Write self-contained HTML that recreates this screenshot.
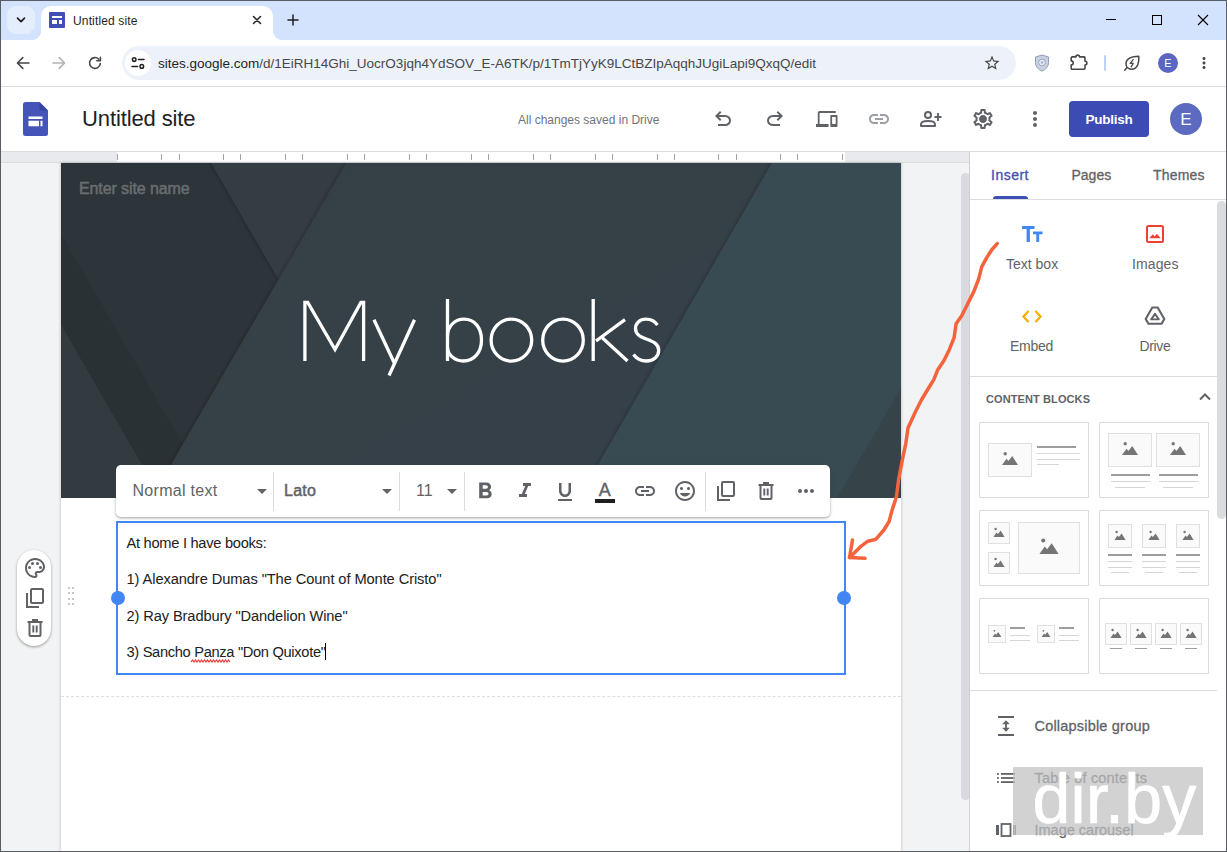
<!DOCTYPE html>
<html><head><meta charset="utf-8">
<style>
*{box-sizing:border-box;margin:0;padding:0}
html,body{width:1227px;height:852px;overflow:hidden;background:#fff;font-family:"Liberation Sans",sans-serif;}
#root{position:relative;width:1227px;height:852px;overflow:hidden;background:#fff}
.abs{position:absolute}
svg{position:absolute;overflow:visible}
.t{position:absolute;white-space:nowrap;line-height:1}
/* chrome */
#tabstrip{left:0;top:0;width:1227px;height:40px;background:#d3e3fd}
#tab{left:41px;top:6px;width:232px;height:34px;background:#fff;border-radius:10px 10px 0 0}
#tabL{left:31px;top:30px;width:10px;height:10px;background:radial-gradient(circle at 0 0,#d3e3fd 10px,#fff 10.5px)}
#tabR{left:273px;top:30px;width:10px;height:10px;background:radial-gradient(circle at 100% 0,#d3e3fd 10px,#fff 10.5px)}
#tsearch{left:7px;top:6px;width:28px;height:28px;border-radius:9px;background:#e4edfc}
#toolbar{left:0;top:40px;width:1227px;height:46px;background:#fff;border-radius:8px 8px 0 0}
#omni{left:122px;top:46px;width:894px;height:34px;border-radius:17px;background:#edf2fa}
#omniic{left:125px;top:50px;width:26px;height:26px;border-radius:13px;background:#fff}
#tbline{left:0;top:86px;width:1227px;height:1px;background:#dadce0}
/* app bar */
#appbar{left:0;top:87px;width:1227px;height:64px;background:#fff}
#appline{left:0;top:151px;width:1227px;height:1px;background:#dadce0}
#publish{left:1069px;top:101px;width:80px;height:36px;border-radius:4px;background:#3c4cb4;color:#fff;font-weight:bold;font-size:13.500px;letter-spacing:-0.250px;text-align:center;line-height:37.500px}
#avatar{left:1170px;top:103px;width:32px;height:32px;border-radius:16px;background:#5c6bc0;color:#fff;font-size:17px;text-align:center;line-height:34.500px}
/* canvas */
#canvas{left:0;top:151px;width:970px;height:701px;background:#f1f3f4}
#page{left:61px;top:163px;width:840px;height:689px;background:#fff;box-shadow:0 0 3px rgba(0,0,0,.25)}
#hero{left:61px;top:163px;width:840px;height:335px;background:#343d43;overflow:hidden}
/* side panel */
#side{left:969px;top:152px;width:258px;height:700px;background:#fff;border-left:1px solid #cdd0d5}
/* borders */
#bl{left:0;top:0;width:1px;height:852px;background:#5a5d63}
#bt{left:0;top:0;width:1227px;height:1px;background:#5a5d63}
#bb{left:0;top:851px;width:1227px;height:1px;background:#5a5d63}
#br{left:1226px;top:0;width:1px;height:852px;background:#5a5d63}
</style></head><body>
<div id="root">
<!-- CHROME -->
<div id="tabstrip" class="abs"></div>
<div id="tsearch" class="abs"></div>
<div id="toolbar" class="abs"></div>
<div id="tab" class="abs"></div><div id="tabL" class="abs"></div><div id="tabR" class="abs"></div>
<div id="omni" class="abs"></div><div id="omniic" class="abs"></div>
<div id="tbline" class="abs"></div>

<!-- tab strip items -->
<svg style="left:15px;top:14px;width:12px;height:12px" viewBox="0 0 12 12"><path d="M2.5 4.2 L6 7.7 L9.5 4.2" fill="none" stroke="#1f1f1f" stroke-width="1.7" stroke-linecap="round" stroke-linejoin="round"/></svg>
<div class="abs" style="left:49px;top:12px;width:16px;height:16px;background:#3f4fb5;border-radius:1px"></div>
<div class="abs" style="left:52px;top:16px;width:10px;height:2px;background:#fff"></div>
<div class="abs" style="left:52px;top:20px;width:5px;height:4px;background:#fff"></div>
<div class="abs" style="left:59px;top:20px;width:3px;height:4px;background:#fff"></div>
<div class="t" style="left:73px;top:15px;font-size:12px;letter-spacing:0.150px;color:#1f1f1f">Untitled site</div>
<svg style="left:252px;top:15px;width:10px;height:10px" viewBox="0 0 10 10"><path d="M1.5 1.5 L8.5 8.5 M8.5 1.5 L1.5 8.5" fill="none" stroke="#1f1f1f" stroke-width="1.5" stroke-linecap="round"/></svg>
<svg style="left:287px;top:14px;width:12px;height:12px" viewBox="0 0 12 12"><path d="M6 1 V11 M1 6 H11" fill="none" stroke="#1f1f1f" stroke-width="1.5" stroke-linecap="round"/></svg>
<!-- window controls -->
<div class="abs" style="left:1106px;top:19px;width:10px;height:1px;background:#000"></div>
<div class="abs" style="left:1152px;top:15px;width:10px;height:10px;border:1px solid #000"></div>
<svg style="left:1198px;top:15px;width:10px;height:10px" viewBox="0 0 10 10"><path d="M0 0 L10 10 M10 0 L0 10" fill="none" stroke="#000" stroke-width="1.1"/></svg>
<!-- nav icons -->
<svg style="left:15px;top:55px;width:16px;height:16px" viewBox="0 0 16 16"><path d="M14 8 H2.6 M7.8 2.6 L2.4 8 L7.8 13.4" fill="none" stroke="#474747" stroke-width="1.6" stroke-linecap="round" stroke-linejoin="round"/></svg>
<svg style="left:51px;top:55px;width:16px;height:16px" viewBox="0 0 16 16"><path d="M2 8 H13.4 M8.2 2.6 L13.6 8 L8.200 13.4" fill="none" stroke="#b4b4b4" stroke-width="1.6" stroke-linecap="round" stroke-linejoin="round"/></svg>
<svg style="left:87px;top:55px;width:16px;height:16px" viewBox="0 0 16 16"><path d="M13.300 8.600 A5.400 5.400 0 1 1 11.800 4.200" fill="none" stroke="#474747" stroke-width="1.6" stroke-linecap="round"/><path d="M13.400 2.200 V5.800 H9.800" fill="none" stroke="#474747" stroke-width="1.6" stroke-linecap="round" stroke-linejoin="round"/></svg>
<!-- site info icon -->
<svg style="left:130px;top:55px;width:16px;height:16px" viewBox="0 0 16 16"><g fill="none" stroke="#1f1f1f" stroke-width="1.5" stroke-linecap="round"><circle cx="4.200" cy="4.600" r="1.800"/><path d="M8.500 4.600 H14"/><circle cx="11.800" cy="11.400" r="1.800"/><path d="M2 11.400 H7.500"/></g></svg>
<div class="t" style="left:158px;top:57px;font-size:13.5px;color:#1f1f1f">sites.google.com<span style="color:#474747">/d/1EiRH14Ghi_UocrO3jqh4YdSOV_E-A6TK/p/1TmTjYyK9LCtBZIpAqqhJUgiLapi9QxqQ/edit</span></div>
<svg style="left:983px;top:54px;width:18px;height:18px" viewBox="0 0 24 24"><path fill="#474747" d="M22 9.240l-7.190-.620L12 2 9.190 8.630 2 9.240l5.460 4.730L5.820 21 12 17.270 18.180 21l-1.630-7.030L22 9.240zM12 15.400l-3.760 2.270 1-4.280-3.320-2.880 4.380-.380L12 6.100l1.710 4.040 4.380.380-3.320 2.880 1 4.280L12 15.400z"/></svg>
<!-- shield ext -->
<svg style="left:1034px;top:54px;width:16px;height:18px" viewBox="0 0 16 18"><path d="M8 1 L14.500 3 V8.500 C14.500 12.500 11.800 15.600 8 17 C4.200 15.600 1.500 12.500 1.500 8.500 V3 Z" fill="#c9d0e0" stroke="#8f9bb8" stroke-width="1"/><circle cx="8" cy="8.500" r="3.400" fill="#e7ebf3" stroke="#9aa5c0" stroke-width="1"/><circle cx="8" cy="8.500" r="1.300" fill="#aab3ca"/></svg>
<!-- puzzle -->
<svg style="left:1069px;top:53px;width:20px;height:20px" viewBox="0 0 20 20"><path d="M3.200 3.900 H6.900 A1.800 1.800 0 0 1 10.500 3.900 H15 A1 1 0 0 1 16 4.900 V8.200 A1.900 1.900 0 0 1 16 12 V15.200 A1 1 0 0 1 15 16.200 H3.200 A1 1 0 0 1 2.200 15.200 V11.900 A2 2 0 0 0 2.200 7.900 V4.900 A1 1 0 0 1 3.200 3.900 Z" fill="none" stroke="#474747" stroke-width="1.600" stroke-linejoin="round"/></svg>
<div class="abs" style="left:1104px;top:55px;width:2px;height:16px;background:#bdd1f8;border-radius:1px"></div>
<!-- leaf -->
<svg style="left:1123px;top:54px;width:18px;height:18px" viewBox="0 0 18 18"><path d="M15.800 2.200 C16.200 8 15 15.200 8.500 15.200 C5.500 15.200 3 13 3 9.800 C3 4.500 9 2.200 15.800 2.200 Z" fill="none" stroke="#474747" stroke-width="1.500" stroke-linejoin="round"/><path d="M3.800 13.600 L1.800 16.200" stroke="#474747" stroke-width="1.500" stroke-linecap="round"/><path d="M10.200 5.600 L7.200 9.400 H10.200 L8.200 12.800" fill="none" stroke="#474747" stroke-width="1.300" stroke-linejoin="round" stroke-linecap="round"/></svg>
<div class="abs" style="left:1158px;top:53px;width:20px;height:20px;border-radius:10px;background:#5b66c0;color:#fff;font-size:11px;line-height:20px;text-align:center">E</div>
<svg style="left:1195px;top:54px;width:18px;height:18px" viewBox="0 0 24 24"><path fill="#474747" d="M12 8c1.100 0 2-.900 2-2s-.900-2-2-2-2 .900-2 2 .900 2 2 2zm0 2c-1.100 0-2 .900-2 2s.900 2 2 2 2-.900 2-2-.900-2-2-2zm0 6c-1.100 0-2 .900-2 2s.900 2 2 2 2-.900 2-2-.900-2-2-2z"/></svg>
<!-- APPBAR -->
<div id="appbar" class="abs"></div>
<div id="publish" class="abs">Publish</div>
<div id="avatar" class="abs">E</div>

<!-- sites logo -->
<svg style="left:23px;top:102px;width:25px;height:34px" viewBox="0 0 25 34"><path d="M2.500 0 H16.500 L25 8.500 V31.500 A2.500 2.500 0 0 1 22.500 34 H2.500 A2.500 2.500 0 0 1 0 31.500 V2.500 A2.500 2.500 0 0 1 2.500 0 Z" fill="#4554b9"/><path d="M16.500 0 L25 8.500 H18.500 A2 2 0 0 1 16.500 6.500 Z" fill="#3443a0"/><path d="M5.500 14.500 H19.500 V17 H5.500 Z M5.500 18.800 H16 V24.200 H5.500 Z M17.500 18.800 H19.500 V24.200 H17.500 Z" fill="#fff"/></svg>
<div class="t" style="left:82px;top:108px;font-size:22px;letter-spacing:-0.120px;color:#202124">Untitled site</div>
<div class="t" style="left:518px;top:114px;font-size:12px;color:#6f7378">All changes saved in Drive</div>
<svg style="left:711px;top:107px;width:24px;height:24px" viewBox="0 0 24 24"><path fill="#5f6368" d="M7 19v-2h7.100q1.575 0 2.738-1T18 13.500 16.838 11 14.100 10H7.800l2.600 2.600L9 14 4 9l5-5 1.400 1.400L7.800 8h6.300q2.425 0 4.163 1.575T20 13.500t-1.737 3.925T14.100 19z"/></svg>
<svg style="left:763px;top:107px;width:24px;height:24px" viewBox="0 0 24 24"><path fill="#5f6368" d="M9.900 19q-2.425 0-4.163-1.575T4 13.500t1.738-3.925T9.900 8h6.300l-2.600-2.600L15 4l5 5-5 5-1.400-1.400 2.600-2.600H9.900q-1.575 0-2.738 1T6 13.500 7.163 16 9.900 17H17v2z"/></svg>
<svg style="left:815.500px;top:107px;width:21.500px;height:24px" viewBox="0 0 24 24" preserveAspectRatio="none"><path fill="#5f6368" d="M4 6h18V4H4c-1.100 0-2 .900-2 2v11H0v3h14v-3H4V6zm19 2h-6c-.550 0-1 .450-1 1v10c0 .550.450 1 1 1h6c.550 0 1-.450 1-1V9c0-.550-.450-1-1-1zm-1 9h-4v-7h4v7z"/></svg>
<svg style="left:867px;top:107px;width:24px;height:24px" viewBox="0 0 24 24"><path fill="#9aa0a6" d="M3.900 12c0-1.710 1.390-3.100 3.100-3.100h4V7H7c-2.760 0-5 2.240-5 5s2.240 5 5 5h4v-1.900H7c-1.710 0-3.100-1.390-3.100-3.100zM8 13h8v-2H8v2zm9-6h-4v1.900h4c1.710 0 3.100 1.390 3.100 3.100s-1.390 3.100-3.100 3.100h-4V17h4c2.760 0 5-2.240 5-5s-2.240-5-5-5z"/></svg>
<svg style="left:919px;top:107px;width:24px;height:24px" viewBox="0 0 24 24"><g fill="none" stroke="#5f6368" stroke-width="2"><circle cx="9" cy="8" r="3"/><path d="M2 19 V17.400 C2 15.200 5.500 14 9 14 C12.500 14 16 15.200 16 17.400 V19 Z" stroke-linejoin="round"/><path d="M19 6 V14 M15.500 10 H22.500" stroke-width="1.900"/></g></svg>
<svg style="left:971px;top:107px;width:24px;height:24px" viewBox="0 0 24 24"><path fill="#5f6368" d="M19.430 12.980c.040-.320.070-.640.070-.980 0-.340-.030-.660-.070-.980l2.110-1.650c.190-.150.240-.420.120-.640l-2-3.460c-.090-.160-.260-.250-.440-.250-.060 0-.120.010-.170.030l-2.490 1c-.520-.400-1.080-.730-1.690-.980l-.380-2.650C14.460 2.180 14.250 2 14 2h-4c-.250 0-.460.180-.490.420l-.380 2.650c-.610.250-1.170.590-1.690.980l-2.490-1c-.060-.020-.120-.030-.180-.030-.170 0-.340.090-.430.250l-2 3.460c-.130.220-.070.490.120.640l2.110 1.650c-.040.320-.070.650-.070.980 0 .330.030.660.070.980l-2.110 1.650c-.190.150-.240.420-.120.640l2 3.460c.090.160.260.250.440.250.060 0 .120-.010.170-.030l2.490-1c.520.400 1.080.730 1.690.980l.380 2.650c.030.240.240.420.490.420h4c.250 0 .460-.180.490-.420l.380-2.650c.610-.250 1.170-.590 1.690-.980l2.490 1c.060.020.120.030.180.030.170 0 .340-.090.430-.250l2-3.460c.120-.220.070-.490-.120-.640l-2.110-1.650zm-1.980-1.710c.040.310.050.520.050.730 0 .210-.020.430-.050.730l-.140 1.130.890.700 1.080.840-.700 1.210-1.270-.510-1.040-.420-.900.680c-.430.320-.840.560-1.250.730l-1.060.430-.160 1.130-.200 1.350h-1.400l-.190-1.350-.160-1.130-1.060-.430c-.430-.180-.830-.410-1.230-.710l-.910-.700-1.060.430-1.270.510-.700-1.210 1.080-.840.890-.700-.140-1.130c-.030-.310-.050-.540-.050-.740s.020-.430.050-.730l.140-1.130-.890-.700-1.080-.840.700-1.210 1.270.510 1.040.420.900-.680c.430-.320.840-.560 1.250-.730l1.060-.430.160-1.130.200-1.350h1.390l.190 1.350.160 1.130 1.060.430c.430.180.830.410 1.230.710l.910.700 1.060-.430 1.270-.510.700 1.210-1.070.850-.890.700.140 1.130zM12 8c-2.210 0-4 1.790-4 4s1.790 4 4 4 4-1.790 4-4-1.790-4-4-4zm0 6c-1.100 0-2-.900-2-2s.900-2 2-2 2 .900 2 2-.900 2-2 2z"/><circle cx="12" cy="12" r="2.600" fill="#5f6368"/></svg>
<svg style="left:1023px;top:107px;width:24px;height:24px" viewBox="0 0 24 24"><path fill="#5f6368" d="M12 8c1.100 0 2-.900 2-2s-.900-2-2-2-2 .900-2 2 .900 2 2 2zm0 2c-1.100 0-2 .900-2 2s.900 2 2 2 2-.900 2-2-.900-2-2-2zm0 6c-1.100 0-2 .900-2 2s.900 2 2 2 2-.900 2-2-.900-2-2-2z"/></svg>
<!-- CANVAS -->
<div id="canvas" class="abs"></div>

<div class="abs" style="left:0;top:152px;width:970px;height:10px;background:#e8eaed"></div>
<div class="abs" style="left:117px;top:152px;width:728px;height:10px;background:#fff"></div>
<div class="abs" style="left:0;top:162px;width:970px;height:1px;background:#dadce0"></div>
<div class="abs" style="left:117px;top:154px;width:1px;height:6px;background:#a0a4a9"></div><div class="abs" style="left:161px;top:154px;width:1px;height:6px;background:#a0a4a9"></div><div class="abs" style="left:179px;top:154px;width:1px;height:6px;background:#a0a4a9"></div><div class="abs" style="left:223px;top:154px;width:1px;height:6px;background:#a0a4a9"></div><div class="abs" style="left:240px;top:154px;width:1px;height:6px;background:#a0a4a9"></div><div class="abs" style="left:285px;top:154px;width:1px;height:6px;background:#a0a4a9"></div><div class="abs" style="left:302px;top:154px;width:1px;height:6px;background:#a0a4a9"></div><div class="abs" style="left:347px;top:154px;width:1px;height:6px;background:#a0a4a9"></div><div class="abs" style="left:364px;top:154px;width:1px;height:6px;background:#a0a4a9"></div><div class="abs" style="left:409px;top:154px;width:1px;height:6px;background:#a0a4a9"></div><div class="abs" style="left:426px;top:154px;width:1px;height:6px;background:#a0a4a9"></div><div class="abs" style="left:471px;top:154px;width:1px;height:6px;background:#a0a4a9"></div><div class="abs" style="left:488px;top:154px;width:1px;height:6px;background:#a0a4a9"></div><div class="abs" style="left:533px;top:154px;width:1px;height:6px;background:#a0a4a9"></div><div class="abs" style="left:550px;top:154px;width:1px;height:6px;background:#a0a4a9"></div><div class="abs" style="left:595px;top:154px;width:1px;height:6px;background:#a0a4a9"></div><div class="abs" style="left:612px;top:154px;width:1px;height:6px;background:#a0a4a9"></div><div class="abs" style="left:657px;top:154px;width:1px;height:6px;background:#a0a4a9"></div><div class="abs" style="left:674px;top:154px;width:1px;height:6px;background:#a0a4a9"></div><div class="abs" style="left:718px;top:154px;width:1px;height:6px;background:#a0a4a9"></div><div class="abs" style="left:736px;top:154px;width:1px;height:6px;background:#a0a4a9"></div><div class="abs" style="left:780px;top:154px;width:1px;height:6px;background:#a0a4a9"></div><div class="abs" style="left:797px;top:154px;width:1px;height:6px;background:#a0a4a9"></div><div class="abs" style="left:842px;top:154px;width:1px;height:6px;background:#a0a4a9"></div>
<div class="abs" style="left:961px;top:172.500px;width:8.500px;height:627px;border-radius:4.250px;background:#d8dadf"></div>
<div id="page" class="abs"></div>
<div id="hero" class="abs">
<svg style="left:0;top:0;width:840px;height:335px" viewBox="61 163 840 335">
<defs>
<linearGradient id="gmid" x1="0" y1="0" x2="1" y2="1"><stop offset="0" stop-color="#353e44"/><stop offset="1" stop-color="#36424a"/></linearGradient>
<clipPath id="mclip"><rect x="290" y="300.700" width="90" height="70"/></clipPath><filter id="sh" x="-10%" y="-10%" width="120%" height="120%"><feDropShadow dx="0" dy="0" stdDeviation="2.500" flood-color="#000" flood-opacity="0.350"/></filter></defs>
<rect x="61" y="163" width="840" height="335" fill="#2d353a"/>
<polygon points="61,234 182.8,444.500 151.7,498 161,498 61,324.800" fill="#2a3135"/>
<polygon points="61,324.800 161,498 61,498" fill="#333b41"/>
<g filter="url(#sh)">
<polygon points="199.700,143 357.8,143 278.500,279.600" fill="#353d43"/>
</g>
<g filter="url(#sh)">
<polygon points="357.8,143 790,143 790,520 138.9,520" fill="url(#gmid)"/>
</g>
<g filter="url(#sh)">
<polygon points="783.500,143 920,143 920,520 566.300,520" fill="#394b53"/>
</g>
<polygon points="901,388 901,498 837,498" fill="#364349"/>
<!-- title -->
<g fill="none" stroke="#fff" stroke-width="3.300" stroke-linejoin="miter" stroke-miterlimit="6">
<g clip-path="url(#mclip)"><path d="M304.900 361 V290 M363.600 361 V290 M304.600 297 L335 349.500 L363.900 297"/></g>
<path d="M374 319.700 L394.500 363.500 M414.500 319.700 L389 375.500"/>
<path d="M447.500 299 V361"/>
<path d="M447.500 336 C447.500 326 455 319.200 464 319.200 C475 319.200 481.500 328 481.500 340 C481.500 352.500 474 361 463.500 361 C455 361 447.500 355 447.500 347"/>
<ellipse cx="511.400" cy="340.100" rx="20.300" ry="21"/>
<ellipse cx="563" cy="340.100" rx="20.300" ry="21"/>
<path d="M593.200 299 V361 M625 319.700 L596 341 M602.500 338 L627.500 361"/>
<path d="M657.500 325 C654.500 321 650.500 319.200 646 319.200 C639.500 319.200 635.500 323.500 635.500 328.500 C635.500 341.500 658.700 337 658.700 350.500 C658.700 356.500 653.500 361 646.500 361 C640.500 361 636.500 358.500 633.500 354.500"/>
</g>
</svg>
<div class="t" style="left:18px;top:18px;font-size:16px;letter-spacing:-0.1px;color:#696d70;-webkit-text-stroke:0.5px #696d70">Enter site name</div>
</div>

<div class="abs" style="left:61px;top:696px;width:840px;height:0;border-top:1px dashed #dcdee1"></div>
<!-- left pill -->
<div class="abs" style="left:17px;top:550px;width:34px;height:96px;border-radius:17px;background:#fff;box-shadow:0 1px 3px rgba(60,64,67,.35),0 1px 2px rgba(60,64,67,.2)"></div>
<svg style="left:23.0px;top:556.0px;width:24px;height:24px" viewBox="0 0 24 24"><path fill="#5f6368" d="M12 22C6.490 22 2 17.510 2 12S6.490 2 12 2s10 4.040 10 9c0 3.310-2.690 6-6 6h-1.770c-.280 0-.500.220-.500.500 0 .120.050.230.130.330.410.470.640 1.060.640 1.670A2.500 2.500 0 0 1 12 22zm0-18c-4.410 0-8 3.590-8 8s3.590 8 8 8c.280 0 .500-.220.500-.500a.540.540 0 0 0-.140-.350c-.410-.460-.630-1.050-.630-1.650a2.500 2.500 0 0 1 2.500-2.500H16c2.210 0 4-1.790 4-4 0-3.860-3.590-7-8-7z"/><circle cx="6.500" cy="11.500" r="1.500" fill="#5f6368"/><circle cx="9.500" cy="7.500" r="1.500" fill="#5f6368"/><circle cx="14.500" cy="7.500" r="1.500" fill="#5f6368"/><circle cx="17.500" cy="11.500" r="1.500" fill="#5f6368"/></svg>
<svg style="left:23px;top:586px;width:24px;height:24px" viewBox="0 0 24 24"><g fill="none" stroke="#5f6368" stroke-width="2"><rect x="8" y="3" width="12" height="14" rx="1"/><path d="M4 7 V21 H16"/></g></svg>
<svg style="left:23px;top:616px;width:24px;height:24px" viewBox="0 0 24 24"><g fill="none" stroke="#5f6368" stroke-width="2"><path d="M4.500 6 H19.500 M9 4 H15" /><path d="M6.500 6 V19 A1 1 0 0 0 7.500 20 H16.500 A1 1 0 0 0 17.500 19 V6"/><path d="M10.300 9.500 V16.500 M13.700 9.500 V16.500" stroke-width="1.900"/></g></svg>
<div class="abs" style="left:68px;top:587.0px;width:2px;height:2px;background:#c4c7cb"></div><div class="abs" style="left:72px;top:587.0px;width:2px;height:2px;background:#c4c7cb"></div><div class="abs" style="left:68px;top:592.4px;width:2px;height:2px;background:#c4c7cb"></div><div class="abs" style="left:72px;top:592.4px;width:2px;height:2px;background:#c4c7cb"></div><div class="abs" style="left:68px;top:597.8px;width:2px;height:2px;background:#c4c7cb"></div><div class="abs" style="left:72px;top:597.8px;width:2px;height:2px;background:#c4c7cb"></div><div class="abs" style="left:68px;top:603.2px;width:2px;height:2px;background:#c4c7cb"></div><div class="abs" style="left:72px;top:603.2px;width:2px;height:2px;background:#c4c7cb"></div>
<!-- textbox -->
<div class="abs" style="left:116px;top:521px;width:730px;height:154px;border:2px solid #4285f4;background:#fff"></div>
<div class="abs" style="left:111px;top:591px;width:14px;height:14px;border-radius:7px;background:#4285f4"></div>
<div class="abs" style="left:837px;top:591px;width:14px;height:14px;border-radius:7px;background:#4285f4"></div>
<div class="t" style="left:126.500px;top:536px;font-size:14.670px;letter-spacing:-0.280px;color:#212121">At home I have books:</div>
<div class="t" style="left:126.500px;top:572px;font-size:14.670px;letter-spacing:-0.090px;color:#212121">1) Alexandre Dumas "The Count of Monte Cristo"</div>
<div class="t" style="left:126.500px;top:608.700px;font-size:14.670px;letter-spacing:-0.115px;color:#212121">2) Ray Bradbury "Dandelion Wine"</div>
<div class="t" style="left:126.500px;top:644.600px;font-size:14.670px;letter-spacing:-0.320px;color:#212121">3) Sancho Panza "Don Quixote"</div>
<div class="abs" style="left:325px;top:643px;width:1px;height:17px;background:#000"></div>
<svg style="left:191px;top:659px;width:39px;height:4px" viewBox="0 0 39 4"><path d="M0 3 L1.500 1 L3 3 L4.500 1 L6 3 L7.500 1 L9 3 L10.500 1 L12 3 L13.500 1 L15 3 L16.500 1 L18 3 L19.500 1 L21 3 L22.500 1 L24 3 L25.500 1 L27 3 L28.500 1 L30 3 L31.500 1 L33 3 L34.500 1 L36 3 L37.500 1 L39 3" fill="none" stroke="#e53935" stroke-width="1.200"/></svg>
<!-- toolbar -->
<div class="abs" style="left:116px;top:465px;width:714px;height:52px;border-radius:5px;background:#fff;box-shadow:0 1px 3px 1px rgba(60,64,67,.15),0 1px 2px rgba(60,64,67,.3)"></div>
<div class="t" style="left:132.500px;top:482.500px;font-size:16px;letter-spacing:0.300px;color:#5f6368">Normal text</div>
<svg style="left:257px;top:488.5px;width:10px;height:5px" viewBox="0 0 10 5"><path d="M0 0 H10 L5 5 Z" fill="#5f6368"/></svg><div class="abs" style="left:273px;top:472px;width:1px;height:39px;background:#dadce0"></div>
<div class="t" style="left:284px;top:482.500px;font-size:16px;color:#5f6368;-webkit-text-stroke:0.500px #5f6368;letter-spacing:0.250px">Lato</div>
<svg style="left:382px;top:488.5px;width:10px;height:5px" viewBox="0 0 10 5"><path d="M0 0 H10 L5 5 Z" fill="#5f6368"/></svg><div class="abs" style="left:399px;top:472px;width:1px;height:39px;background:#dadce0"></div>
<div class="t" style="left:416px;top:482.500px;font-size:16px;color:#5f6368">11</div>
<svg style="left:447px;top:488.5px;width:10px;height:5px" viewBox="0 0 10 5"><path d="M0 0 H10 L5 5 Z" fill="#5f6368"/></svg><div class="abs" style="left:464px;top:472px;width:1px;height:39px;background:#dadce0"></div>
<svg style="left:470.700px;top:477.500px;width:28px;height:27px" viewBox="0 0 24 24" preserveAspectRatio="none"><path fill="#5f6368" d="M15.600 10.790c.970-.670 1.650-1.770 1.650-2.790 0-2.260-1.750-4-4-4H7v14h7.040c2.090 0 3.710-1.700 3.710-3.790 0-1.520-.860-2.820-2.150-3.420zM10 6.500h3c.830 0 1.500.670 1.500 1.500s-.670 1.500-1.500 1.500h-3v-3zm3.500 9H10v-3h3.500c.830 0 1.500.670 1.500 1.500s-.670 1.500-1.500 1.500z"/></svg>
<svg style="left:513.0px;top:479.0px;width:24px;height:24px" viewBox="0 0 24 24"><path fill="#5f6368" d="M10 4v3h2.210l-3.420 8H6v3h8v-3h-2.210l3.420-8H18V4z"/></svg>
<svg style="left:553.0px;top:479.5px;width:24px;height:24px" viewBox="0 0 24 24"><path fill="#5f6368" d="M12 17c3.310 0 6-2.690 6-6V3h-2.500v8c0 1.930-1.570 3.500-3.500 3.500S8.500 12.930 8.500 11V3H6v8c0 3.310 2.690 6 6 6zm-7 2v2h14v-2H5z"/></svg>
<div class="t" style="left:598.800px;top:481.300px;font-size:18px;color:#5f6368;-webkit-text-stroke:0.400px #5f6368">A</div>
<div class="abs" style="left:595px;top:498.500px;width:20px;height:4px;background:#1f1f1f"></div>
<svg style="left:633.0px;top:479.0px;width:24px;height:24px" viewBox="0 0 24 24"><path fill="#5f6368" d="M3.900 12c0-1.710 1.390-3.100 3.100-3.100h4V7H7c-2.760 0-5 2.240-5 5s2.240 5 5 5h4v-1.900H7c-1.710 0-3.100-1.390-3.100-3.100zM8 13h8v-2H8v2zm9-6h-4v1.900h4c1.710 0 3.100 1.390 3.100 3.100s-1.390 3.100-3.100 3.100h-4V17h4c2.760 0 5-2.240 5-5s-2.240-5-5-5z"/></svg>
<svg style="left:672.7px;top:479.0px;width:24px;height:24px" viewBox="0 0 24 24"><path fill="#5f6368" d="M11.990 2C6.470 2 2 6.480 2 12s4.470 10 9.990 10C17.520 22 22 17.520 22 12S17.520 2 11.990 2zM12 20c-4.420 0-8-3.580-8-8s3.580-8 8-8 8 3.580 8 8-3.580 8-8 8zm3.500-9c.830 0 1.500-.670 1.500-1.500S16.330 8 15.500 8 14 8.670 14 9.500s.670 1.500 1.500 1.500zm-7 0c.830 0 1.500-.670 1.500-1.500S9.330 8 8.500 8 7 8.670 7 9.500 7.670 11 8.500 11zm3.500 6.500c2.330 0 4.310-1.460 5.110-3.500H6.890c.800 2.040 2.780 3.500 5.110 3.500z"/></svg>
<div class="abs" style="left:705px;top:472px;width:1px;height:39px;background:#dadce0"></div>
<svg style="left:713.5px;top:479px;width:24px;height:24px" viewBox="0 0 24 24"><g fill="none" stroke="#5f6368" stroke-width="2"><rect x="8" y="3" width="12" height="14" rx="1"/><path d="M4 7 V21 H16"/></g></svg>
<svg style="left:754px;top:479px;width:24px;height:24px" viewBox="0 0 24 24"><g fill="none" stroke="#5f6368" stroke-width="2"><path d="M4.500 6 H19.500 M9 4 H15" /><path d="M6.500 6 V19 A1 1 0 0 0 7.500 20 H16.500 A1 1 0 0 0 17.500 19 V6"/><path d="M10.300 9.500 V16.500 M13.700 9.500 V16.500" stroke-width="1.900"/></g></svg>
<svg style="left:794.0px;top:479.0px;width:24px;height:24px" viewBox="0 0 24 24"><path fill="#5f6368" d="M6 10c-1.100 0-2 .900-2 2s.900 2 2 2 2-.900 2-2-.900-2-2-2zm12 0c-1.100 0-2 .900-2 2s.900 2 2 2 2-.900 2-2-.900-2-2-2zm-6 0c-1.100 0-2 .900-2 2s.900 2 2 2 2-.900 2-2-.900-2-2-2z"/></svg>

<!-- SIDE -->
<div id="side" class="abs"></div>
<!-- tabs --><div class="t" style="left:991px;top:168px;font-size:14px;letter-spacing:0.500px;color:#3f4fb5;-webkit-text-stroke:0.300px #3f4fb5">Insert</div><div class="t" style="left:1071.500px;top:168px;font-size:14px;color:#5f6368;-webkit-text-stroke:0.300px #5f6368">Pages</div><div class="t" style="left:1153px;top:168px;font-size:14px;letter-spacing:0.170px;color:#5f6368;-webkit-text-stroke:0.300px #5f6368">Themes</div><div class="abs" style="left:993px;top:196px;width:35px;height:3px;border-radius:3px 3px 0 0;background:#3f4fb5"></div><div class="abs" style="left:970px;top:199px;width:257px;height:1px;background:#dadce0"></div><div class="abs" style="left:1217px;top:201px;width:9px;height:318px;border-radius:4.500px;background:#dadce0"></div><svg style="left:1022px;top:226px;width:21px;height:16px" viewBox="0 0 21 16"><path fill="#4285f4" d="M0 0 H12.500 V3 H7.900 V16 H4.600 V3 H0 Z M11 5.500 H20.500 V8.200 H17.200 V16 H14.300 V8.200 H11 Z"/></svg><div class="t" style="left:1006px;top:257px;font-size:14px;color:#5f6368">Text box</div><svg style="left:1146px;top:225px;width:18px;height:18px" viewBox="0 0 18 18"><rect x="1" y="1" width="16" height="16" rx="1.500" fill="none" stroke="#ea4335" stroke-width="2"/><path d="M3.300 13.300 L6.800 9.200 L8.700 11.400 L10.900 8.800 L14.700 13.300 Z" fill="#ea4335"/></svg><div class="t" style="left:1132px;top:257px;font-size:14px;letter-spacing:0.100px;color:#5f6368">Images</div><svg style="left:1022px;top:310px;width:20px;height:13px" viewBox="0 0 20 13"><path d="M6.500 1 L1.500 6.500 L6.500 12 M13.500 1 L18.500 6.500 L13.500 12" fill="none" stroke="#f9ab00" stroke-width="2.200"/></svg><div class="t" style="left:1010px;top:339px;font-size:14px;letter-spacing:-0.250px;color:#5f6368">Embed</div><svg style="left:1144px;top:305px;width:22px;height:21px" viewBox="0 0 22 21"><path d="M8.300 2.500 H13.700 L20.300 14 L17.600 18.700 H4.400 L1.700 14 Z" fill="none" stroke="#5f6368" stroke-width="2.100" stroke-linejoin="round"/><path d="M11 8.800 L14.800 14.400 H7.200 Z" fill="none" stroke="#5f6368" stroke-width="1.900" stroke-linejoin="round"/></svg><div class="t" style="left:1139.500px;top:339px;font-size:14px;letter-spacing:-0.350px;color:#5f6368">Drive</div><div class="abs" style="left:970px;top:376px;width:247px;height:1px;background:#dadce0"></div><div class="t" style="left:986px;top:393.500px;font-size:11px;font-weight:bold;letter-spacing:0.100px;color:#5f6368">CONTENT BLOCKS</div><svg style="left:1199px;top:392px;width:12px;height:9px" viewBox="0 0 12 9"><path d="M1 7.500 L6 2.500 L11 7.500" fill="none" stroke="#5f6368" stroke-width="2"/></svg><div class="abs" style="left:979px;top:422px;width:110px;height:76px;border:1px solid #dadce0;background:#fff"></div><div class="abs" style="left:979px;top:510px;width:110px;height:76px;border:1px solid #dadce0;background:#fff"></div><div class="abs" style="left:979px;top:598px;width:110px;height:76px;border:1px solid #dadce0;background:#fff"></div><div class="abs" style="left:1099px;top:422px;width:110px;height:76px;border:1px solid #dadce0;background:#fff"></div><div class="abs" style="left:1099px;top:510px;width:110px;height:76px;border:1px solid #dadce0;background:#fff"></div><div class="abs" style="left:1099px;top:598px;width:110px;height:76px;border:1px solid #dadce0;background:#fff"></div><div class="abs" style="left:988px;top:443px;width:44px;height:34px;border:1px solid #e0e0e0;background:#fafafa"></div><svg style="left:0;top:0;width:1px;height:1px"><g fill="#757575"><polygon points="1002.0,465.0 1018.0,465.0 1012.2,456.0 1008.4,460.9 1006.5,458.7"/><circle cx="1005.2" cy="453.8" r="1.7"/></g></svg><div class="abs" style="left:1037px;top:446px;width:39px;height:2px;background:#9e9e9e"></div><div class="abs" style="left:1037px;top:453px;width:43px;height:1px;background:#d6d6d6"></div><div class="abs" style="left:1037px;top:459px;width:43px;height:1px;background:#d6d6d6"></div><div class="abs" style="left:1037px;top:464px;width:22px;height:1px;background:#d6d6d6"></div><div class="abs" style="left:1108px;top:433px;width:44px;height:34px;border:1px solid #e0e0e0;background:#fafafa"></div><svg style="left:0;top:0;width:1px;height:1px"><g fill="#757575"><polygon points="1122.0,455.0 1138.0,455.0 1132.2,446.0 1128.4,450.9 1126.5,448.7"/><circle cx="1125.2" cy="443.8" r="1.7"/></g></svg><div class="abs" style="left:1111px;top:474px;width:39px;height:2px;background:#9e9e9e"></div><div class="abs" style="left:1111px;top:481px;width:39px;height:1px;background:#d6d6d6"></div><div class="abs" style="left:1115px;top:487px;width:30px;height:1px;background:#d6d6d6"></div><div class="abs" style="left:1156px;top:433px;width:44px;height:34px;border:1px solid #e0e0e0;background:#fafafa"></div><svg style="left:0;top:0;width:1px;height:1px"><g fill="#757575"><polygon points="1170.0,455.0 1186.0,455.0 1180.2,446.0 1176.4,450.9 1174.5,448.7"/><circle cx="1173.2" cy="443.8" r="1.7"/></g></svg><div class="abs" style="left:1159px;top:474px;width:39px;height:2px;background:#9e9e9e"></div><div class="abs" style="left:1159px;top:481px;width:39px;height:1px;background:#d6d6d6"></div><div class="abs" style="left:1163px;top:487px;width:30px;height:1px;background:#d6d6d6"></div><div class="abs" style="left:988px;top:522px;width:22px;height:22px;border:1px solid #e0e0e0;background:#fafafa"></div><svg style="left:0;top:0;width:1px;height:1px"><g fill="#757575"><polygon points="993.4,536.9 1004.6,536.9 1000.6,530.6 997.9,534.0 996.5,532.4"/><circle cx="995.6" cy="529.0" r="1.2"/></g></svg><div class="abs" style="left:988px;top:552px;width:22px;height:22px;border:1px solid #e0e0e0;background:#fafafa"></div><svg style="left:0;top:0;width:1px;height:1px"><g fill="#757575"><polygon points="993.4,566.9 1004.6,566.9 1000.6,560.6 997.9,564.0 996.5,562.4"/><circle cx="995.6" cy="559.0" r="1.2"/></g></svg><div class="abs" style="left:1018px;top:522px;width:62px;height:52px;border:1px solid #e0e0e0;background:#fafafa"></div><svg style="left:0;top:0;width:1px;height:1px"><g fill="#757575"><polygon points="1039.4,554.1 1058.6,554.1 1051.7,543.3 1047.1,549.2 1044.8,546.5"/><circle cx="1043.2" cy="540.6" r="2.0"/></g></svg><div class="abs" style="left:1108px;top:524px;width:24px;height:24px;border:1px solid #e0e0e0;background:#fafafa"></div><svg style="left:0;top:0;width:1px;height:1px"><g fill="#757575"><polygon points="1114.4,539.9 1125.6,539.9 1121.6,533.6 1118.9,537.0 1117.5,535.4"/><circle cx="1116.6" cy="532.0" r="1.2"/></g></svg><div class="abs" style="left:1108px;top:554px;width:24px;height:2px;background:#9e9e9e"></div><div class="abs" style="left:1108px;top:561px;width:24px;height:1px;background:#d6d6d6"></div><div class="abs" style="left:1108px;top:567px;width:24px;height:1px;background:#d6d6d6"></div><div class="abs" style="left:1111px;top:572px;width:18px;height:1px;background:#d6d6d6"></div><div class="abs" style="left:1142px;top:524px;width:24px;height:24px;border:1px solid #e0e0e0;background:#fafafa"></div><svg style="left:0;top:0;width:1px;height:1px"><g fill="#757575"><polygon points="1148.4,539.9 1159.6,539.9 1155.6,533.6 1152.9,537.0 1151.5,535.4"/><circle cx="1150.6" cy="532.0" r="1.2"/></g></svg><div class="abs" style="left:1142px;top:554px;width:24px;height:2px;background:#9e9e9e"></div><div class="abs" style="left:1142px;top:561px;width:24px;height:1px;background:#d6d6d6"></div><div class="abs" style="left:1142px;top:567px;width:24px;height:1px;background:#d6d6d6"></div><div class="abs" style="left:1145px;top:572px;width:18px;height:1px;background:#d6d6d6"></div><div class="abs" style="left:1176px;top:524px;width:24px;height:24px;border:1px solid #e0e0e0;background:#fafafa"></div><svg style="left:0;top:0;width:1px;height:1px"><g fill="#757575"><polygon points="1182.4,539.9 1193.6,539.9 1189.6,533.6 1186.9,537.0 1185.5,535.4"/><circle cx="1184.6" cy="532.0" r="1.2"/></g></svg><div class="abs" style="left:1176px;top:554px;width:24px;height:2px;background:#9e9e9e"></div><div class="abs" style="left:1176px;top:561px;width:24px;height:1px;background:#d6d6d6"></div><div class="abs" style="left:1176px;top:567px;width:24px;height:1px;background:#d6d6d6"></div><div class="abs" style="left:1179px;top:572px;width:18px;height:1px;background:#d6d6d6"></div><div class="abs" style="left:988px;top:625px;width:18px;height:18px;border:1px solid #e0e0e0;background:#fafafa"></div><svg style="left:0;top:0;width:1px;height:1px"><g fill="#757575"><polygon points="992.6,637.0 1001.4,637.0 998.2,632.1 996.1,634.8 995.1,633.6"/><circle cx="994.4" cy="630.8" r="0.9"/></g></svg><div class="abs" style="left:1010px;top:627px;width:15px;height:2px;background:#9e9e9e"></div><div class="abs" style="left:1010px;top:635px;width:20px;height:1px;background:#d6d6d6"></div><div class="abs" style="left:1010px;top:640px;width:20px;height:1px;background:#d6d6d6"></div><div class="abs" style="left:1037px;top:625px;width:18px;height:18px;border:1px solid #e0e0e0;background:#fafafa"></div><svg style="left:0;top:0;width:1px;height:1px"><g fill="#757575"><polygon points="1041.6,637.0 1050.4,637.0 1047.2,632.1 1045.1,634.8 1044.1,633.6"/><circle cx="1043.4" cy="630.8" r="0.9"/></g></svg><div class="abs" style="left:1059px;top:627px;width:15px;height:2px;background:#9e9e9e"></div><div class="abs" style="left:1059px;top:635px;width:20px;height:1px;background:#d6d6d6"></div><div class="abs" style="left:1059px;top:640px;width:20px;height:1px;background:#d6d6d6"></div><div class="abs" style="left:1105px;top:623px;width:22px;height:22px;border:1px solid #e0e0e0;background:#fafafa"></div><svg style="left:0;top:0;width:1px;height:1px"><g fill="#757575"><polygon points="1110.4,637.9 1121.6,637.9 1117.6,631.6 1114.9,635.0 1113.5,633.4"/><circle cx="1112.6" cy="630.0" r="1.2"/></g></svg><div class="abs" style="left:1110px;top:648px;width:12px;height:1px;background:#9e9e9e"></div><div class="abs" style="left:1130px;top:623px;width:22px;height:22px;border:1px solid #e0e0e0;background:#fafafa"></div><svg style="left:0;top:0;width:1px;height:1px"><g fill="#757575"><polygon points="1135.4,637.9 1146.6,637.9 1142.6,631.6 1139.9,635.0 1138.5,633.4"/><circle cx="1137.6" cy="630.0" r="1.2"/></g></svg><div class="abs" style="left:1135px;top:648px;width:12px;height:1px;background:#9e9e9e"></div><div class="abs" style="left:1155px;top:623px;width:22px;height:22px;border:1px solid #e0e0e0;background:#fafafa"></div><svg style="left:0;top:0;width:1px;height:1px"><g fill="#757575"><polygon points="1160.4,637.9 1171.6,637.9 1167.6,631.6 1164.9,635.0 1163.5,633.4"/><circle cx="1162.6" cy="630.0" r="1.2"/></g></svg><div class="abs" style="left:1160px;top:648px;width:12px;height:1px;background:#9e9e9e"></div><div class="abs" style="left:1180px;top:623px;width:22px;height:22px;border:1px solid #e0e0e0;background:#fafafa"></div><svg style="left:0;top:0;width:1px;height:1px"><g fill="#757575"><polygon points="1185.4,637.9 1196.6,637.9 1192.6,631.6 1189.9,635.0 1188.5,633.4"/><circle cx="1187.6" cy="630.0" r="1.2"/></g></svg><div class="abs" style="left:1185px;top:648px;width:12px;height:1px;background:#9e9e9e"></div><div class="abs" style="left:970px;top:690px;width:247px;height:1px;background:#dadce0"></div><svg style="left:998px;top:716px;width:16px;height:20px" viewBox="0 0 16 20"><g fill="none" stroke="#5f6368" stroke-width="1.800"><path d="M0 1 H16 M0 19 H16 M8 6 V14"/></g><path d="M4.200 8.300 L8 4.300 L11.800 8.300 Z M4.200 11.700 L8 15.700 L11.800 11.700 Z" fill="#5f6368"/></svg><div class="t" style="left:1034.500px;top:718.500px;font-size:14.500px;letter-spacing:0.200px;color:#5f6368;-webkit-text-stroke:0.300px #5f6368">Collapsible group</div><svg style="left:997px;top:773px;width:18px;height:10px" viewBox="0 0 18 10"><g fill="#5f6368"><rect x="0" y="0" width="1.800" height="1.800"/><rect x="0" y="4.100" width="1.800" height="1.800"/><rect x="0" y="8.200" width="1.800" height="1.800"/><rect x="4" y="0" width="14" height="1.800"/><rect x="4" y="4.100" width="14" height="1.800"/><rect x="4" y="8.200" width="14" height="1.800"/></g></svg><div class="t" style="left:1034.500px;top:770.500px;font-size:14.500px;letter-spacing:0.180px;color:#5f6368;-webkit-text-stroke:0.300px #5f6368">Table of contents</div><svg style="left:996px;top:823px;width:20px;height:14px" viewBox="0 0 20 14"><g fill="#5f6368"><rect x="0" y="2" width="3" height="10"/><rect x="17" y="2" width="1.500" height="10"/><rect x="19" y="2" width="1" height="10"/></g><rect x="5.500" y="1" width="9" height="12" fill="none" stroke="#5f6368" stroke-width="1.800"/></svg><div class="t" style="left:1034.500px;top:823px;font-size:14.500px;color:#5f6368;-webkit-text-stroke:0.300px #5f6368">Image carousel</div><div class="abs" style="left:1013px;top:767px;width:190px;height:68px;background:rgba(192,192,192,.720);overflow:hidden"><div class="t" style="left:19.500px;top:-2.500px;font-size:68px;letter-spacing:0.250px;color:#fff;-webkit-text-stroke:0.700px #fff;transform:scaleY(1.045);transform-origin:0 58px">dir.by</div></div>
<svg style="left:0;top:0;width:1227px;height:852px" viewBox="0 0 1227 852"><g fill="none" stroke="#f4633c" stroke-width="3.500" stroke-linecap="round" stroke-linejoin="round"><path d="M997.2 243.6 L991.6 250.0 L986.6 257.9 L981.7 266.9 L978.7 278.9 L973.7 291.9 L967.7 303.8 L961.7 315.8 L956.1 323.8 L954.1 337.7 L949.3 349.7 L943.8 360.7 L937.8 369.7 L933.8 379.6 L927.7 389.5 L921.4 400.0 L915.2 412.3 L908.0 427.9 L905.8 443.5 L902.5 459.1 L898.7 479.2 L896.4 497.0 L892.0 510.4 L889.1 521.5 L883.5 530.5 L875.7 539.4 L867.9 541.2 L861.2 546.1 L854.5 552.8 L849.5 557.5"/><path d="M852.500 540 L849.500 557.500 L865 558.300"/></g></svg>
<div id="appline" class="abs"></div>
<!-- BORDERS -->
<div id="bl" class="abs"></div><div id="bt" class="abs"></div><div id="bb" class="abs"></div><div id="br" class="abs"></div>
</div>
</body></html>
